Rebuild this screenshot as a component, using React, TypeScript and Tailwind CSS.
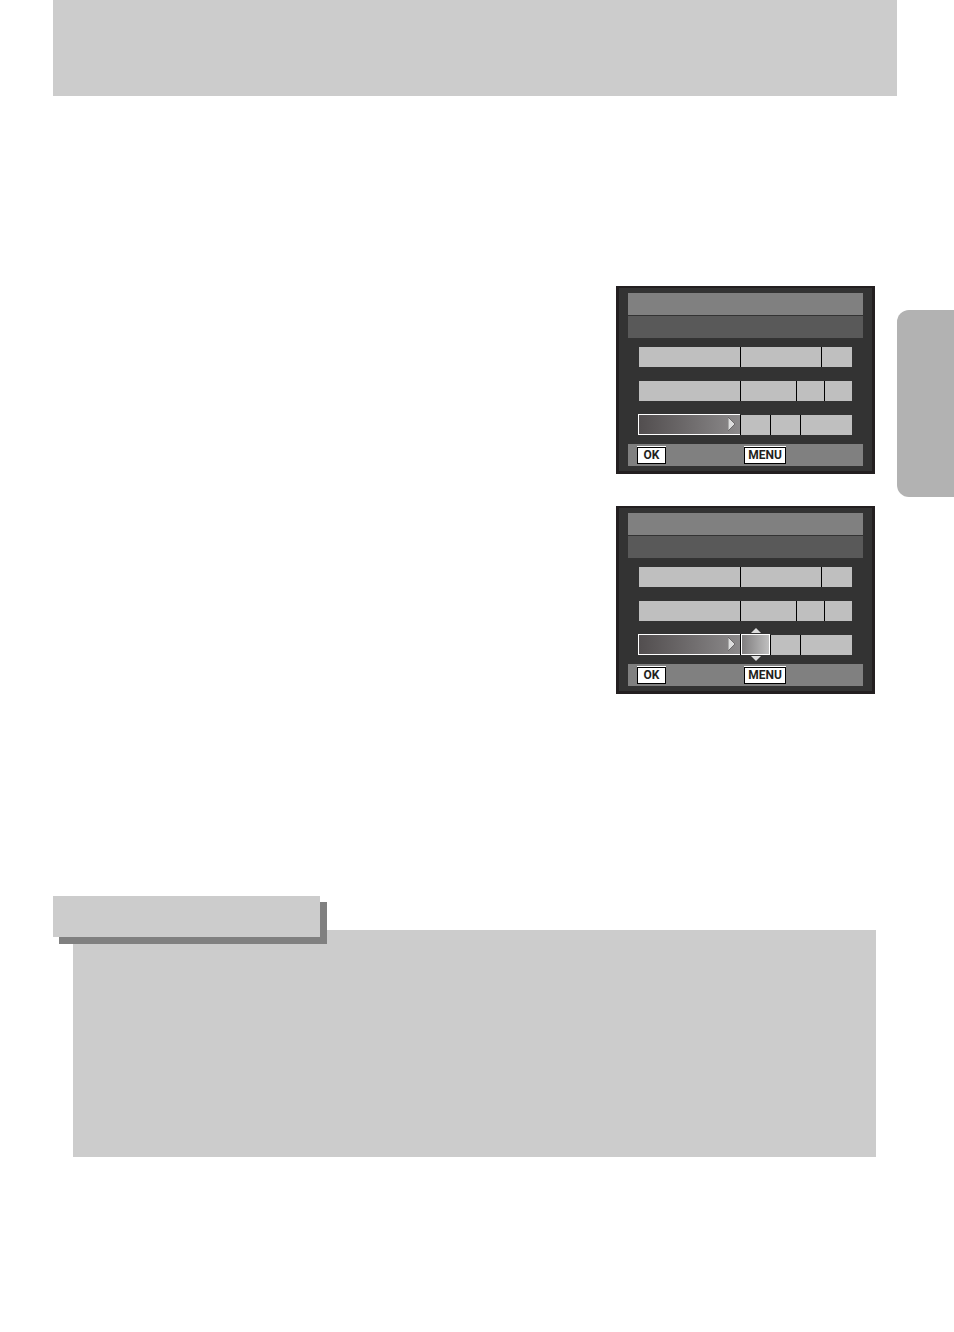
import React from "react";

const Key = ({ label, className }: { label: string; className: string }) => (
  <button
    type="button"
    className={`h-[17px] border border-black bg-white text-center font-[Roboto,sans-serif] text-xs font-bold leading-[15px] text-[#231f20] shadow-[0_-1px_0_#fff] ${className}`}
  >
    {label}
  </button>
);

const Cell = ({ className }: { className: string }) => (
  <div className={`border-l border-black bg-[#bfbfbf] ${className}`} />
);

const Screen = ({ editing = false }: { editing?: boolean }) => (
  <section className="w-[259px] border-[3px] border-t-2 border-[#231f20] bg-[#333] px-[9px] py-[5px]">
    <div className="h-[22px] bg-[#808080]" />
    <div className="mt-px h-[22px] bg-[#595959]" />

    <div className="flex flex-col gap-3.5 px-[11px] py-[9px]">
      <div className="flex h-5">
        <div className="w-[101px] bg-[#bfbfbf]" />
        <Cell className="w-[81px]" />
        <Cell className="w-[31px]" />
      </div>
      <div className="flex h-5">
        <div className="w-[101px] bg-[#bfbfbf]" />
        <Cell className="w-14" />
        <Cell className="w-7" />
        <Cell className="w-7" />
      </div>

      {/* Selected row */}
      <div className="flex h-5">
        <div className="-ml-px -mt-px flex w-[102px] items-start justify-end border border-r-0 border-white bg-linear-to-r from-[#524e4f] to-[#8c8a8b] pr-1 pt-px">
          <svg className="h-4 w-[9px]" viewBox="0 0 9 16">
            <path d="M1 1V15L8 8Z" fill="#ddd" />
            <path d="M1.5 1.5V14.5" stroke="#aaa" />
            <path
              d="M1 1L8 8L1 15"
              fill="none"
              stroke="#5c595a"
              strokeWidth="0.8"
            />
          </svg>
        </div>
        {editing ? (
          <div className="relative -mt-px flex w-[30px] border-l border-black">
            <div className="w-full border border-white bg-linear-to-r from-[#807e7f] to-[#bfbfbf]" />
            <svg className="absolute -top-[7px] left-[9px] h-[6px] w-3" viewBox="0 0 12 6">
              <path d="M1 6L6 1L11 6Z" fill="#ddd" />
            </svg>
            <svg className="absolute -bottom-[7px] left-[9px] h-[6px] w-3" viewBox="0 0 12 6">
              <path d="M1 0L6 5L11 0Z" fill="#ddd" />
            </svg>
          </div>
        ) : (
          <Cell className="w-[30px]" />
        )}
        <Cell className="w-[30px]" />
        <Cell className="w-[52px]" />
      </div>
    </div>

    <div className="flex h-[22px] gap-[78px] bg-[#808080] pl-[9px] pt-[3px]">
      <Key label="OK" className="w-[29px]" />
      <Key label="MENU" className="w-[42px]" />
    </div>
  </section>
);

const App = () => (
  <div className="min-h-screen bg-white">
    <header className="ml-[53px] mr-[57px] h-24 bg-[#ccc]" />

    <main>
      <div className="flex items-start justify-end gap-[22px] pt-[190px]">
        <div className="flex flex-col gap-8">
          <Screen />
          <Screen editing />
        </div>
        <aside className="mt-6 h-[187px] w-[57px] rounded-l-xl bg-[#b2b2b2]" />
      </div>

      {/* Memo box */}
      <section className="ml-[53px] mr-[78px] mt-[202px]">
        <div className="relative h-[41px] w-[267px] bg-[#ccc] shadow-[6px_6px_0_#808080,7px_6px_0_#808080,6px_7px_0_#808080,7px_7px_0_#808080]" />
        <div className="-mt-[7px] ml-5 h-[227px] bg-[#ccc]" />
      </section>
    </main>
  </div>
);

export default App;
